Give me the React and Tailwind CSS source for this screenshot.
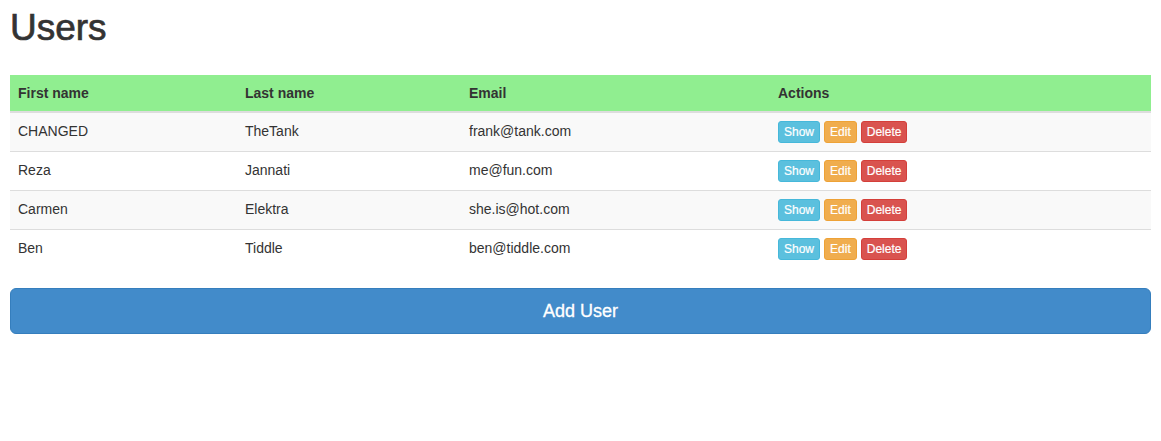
export default function App() {
  const users = [
    ["CHANGED", "TheTank", "frank@tank.com"],
    ["Reza", "Jannati", "me@fun.com"],
    ["Carmen", "Elektra", "she.is@hot.com"],
    ["Ben", "Tiddle", "ben@tiddle.com"],
  ];
  const font = { fontFamily: '"Liberation Sans", Arial, Helvetica, sans-serif' };
  return (
    <div className="min-h-[441px] bg-white px-[10px] text-[#333] text-[14px] leading-[20px]" style={font}>
      <h1 className="pt-[8px] text-[37px] leading-[39.6px] font-medium text-[#333] [-webkit-text-stroke:0.7px_#333]">Users</h1>
      <table className="mt-[27px] w-full table-fixed border-collapse">
        <thead>
          <tr className="bg-[#90ee90]">
            <th className="w-[227px] px-[8px] py-[8px] text-left font-bold border-b-2 border-[#ddd]">First name</th>
            <th className="w-[224px] px-[8px] py-[8px] text-left font-bold border-b-2 border-[#ddd]">Last name</th>
            <th className="w-[309px] px-[8px] py-[8px] text-left font-bold border-b-2 border-[#ddd]">Email</th>
            <th className="px-[8px] py-[8px] text-left font-bold border-b-2 border-[#ddd]">Actions</th>
          </tr>
        </thead>
        <tbody>
          {users.map((u, i) => (
            <tr key={i} className={i % 2 === 0 ? "bg-[#f9f9f9]" : "bg-white"}>
              <td className={"px-[8px] py-[8px] align-top " + (i > 0 ? "border-t border-[#ddd]" : "")}>{u[0]}</td>
              <td className={"px-[8px] py-[8px] align-top " + (i > 0 ? "border-t border-[#ddd]" : "")}>{u[1]}</td>
              <td className={"px-[8px] py-[8px] align-top " + (i > 0 ? "border-t border-[#ddd]" : "")}>{u[2]}</td>
              <td className={"px-[8px] py-[8px] align-top " + (i > 0 ? "border-t border-[#ddd]" : "")}>
                <div className="flex items-center gap-[4px]">
                  <button className="px-[5px] py-[1px] text-[12px] leading-[18px] text-white bg-[#5bc0de] border border-[#46b8da] rounded-[3px] [-webkit-text-stroke:0.2px_#fff]">Show</button>
                  <button className="px-[5px] py-[1px] text-[12px] leading-[18px] text-white bg-[#f0ad4e] border border-[#eea236] rounded-[3px] [-webkit-text-stroke:0.2px_#fff]">Edit</button>
                  <button className="px-[5px] py-[1px] text-[12px] leading-[18px] text-white bg-[#d9534f] border border-[#d43f3a] rounded-[3px] [-webkit-text-stroke:0.2px_#fff]">Delete</button>
                </div>
              </td>
            </tr>
          ))}
        </tbody>
      </table>
      <button className="mt-[20px] w-full px-[16px] py-[10px] text-[18px] leading-[24px] text-white bg-[#428bca] border border-[#357ebd] rounded-[6px] [-webkit-text-stroke:0.3px_#fff]">
        Add User
      </button>
    </div>
  );
}
